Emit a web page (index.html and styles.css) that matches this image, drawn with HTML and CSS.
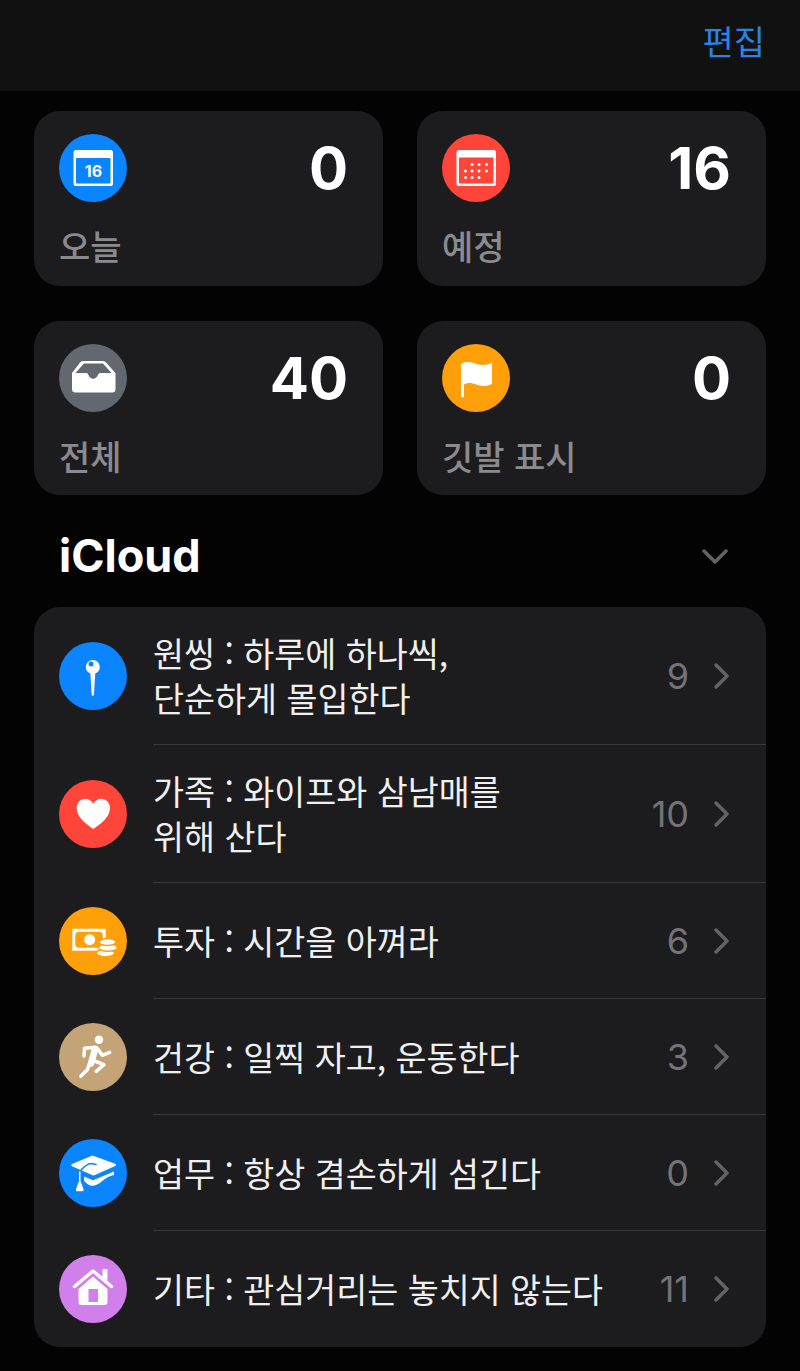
FILE: index.html
```html
<!DOCTYPE html>
<html lang="ko">
<head>
  <meta charset="UTF-8">
  <title>Reminders</title>
  <link rel="stylesheet" href="styles.css">
</head>
<body>
  <div class="navBar"><span class="editBtn">편집</span></div>

  <div class="cards">
    <div class="card">
      <div class="cardTop">
        <span class="circle blue">
          <svg viewBox="0 0 68 68" width="68" height="68"><rect x="14.500" y="16" width="39.500" height="36" rx="2.500" fill="#fff"/><rect x="17" y="24" width="34.500" height="25.500" rx="1" fill="#0a84ff"/><text x="34.500" y="43" class="calNum">16</text></svg>
        </span>
        <span class="count">0</span>
      </div>
      <div class="cardLabel">오늘</div>
    </div>
    <div class="card">
      <div class="cardTop">
        <span class="circle red">
          <svg viewBox="0 0 68 68" width="68" height="68"><rect x="14.500" y="16" width="39.500" height="36" rx="2.500" fill="#fff"/><rect x="17" y="23.500" width="34.500" height="26" rx="1" fill="#ff453a"/><g fill="#fff"><circle cx="30" cy="30.500" r="1.500"/><circle cx="37" cy="30.500" r="1.500"/><circle cx="44.500" cy="30.500" r="1.500"/><circle cx="23.500" cy="37" r="1.500"/><circle cx="30" cy="37" r="1.500"/><circle cx="37" cy="37" r="1.500"/><circle cx="44.500" cy="37" r="1.500"/><circle cx="23.500" cy="43.500" r="1.500"/><circle cx="30" cy="43.500" r="1.500"/><circle cx="37" cy="43.500" r="1.500"/></g></svg>
        </span>
        <span class="count">16</span>
      </div>
      <div class="cardLabel">예정</div>
    </div>
    <div class="card">
      <div class="cardTop">
        <span class="circle gray">
          <svg viewBox="0 0 68 68" width="68" height="68"><path fill="#fff" fill-rule="evenodd" d="M24 17h20a4 4 0 0 1 3 1.500L56.500 29v16a3.500 3.500 0 0 1-3.500 3.500H16.500A3.500 3.500 0 0 1 13 45V29l8-10.500A4 4 0 0 1 24 17zm1 2.500L16.500 29H27c1.500 0 2 .8 2.500 2 .7 2 2.500 3.700 4.700 3.700s4-1.700 4.700-3.700c.5-1.200 1-2 2.500-2h11.100L44 19.500z"/></svg>
        </span>
        <span class="count">40</span>
      </div>
      <div class="cardLabel">전체</div>
    </div>
    <div class="card">
      <div class="cardTop">
        <span class="circle orange">
          <svg viewBox="0 0 68 68" width="68" height="68"><path fill="#fff" d="M19 20c4-2.500 9-2.500 14-.5s11 2 17-.5v21c-5 2.500-11 2.500-16 .5s-8-2-12 0V52a1.500 1.500 0 0 1-3 0z"/></svg>
        </span>
        <span class="count">0</span>
      </div>
      <div class="cardLabel">깃발 표시</div>
    </div>
  </div>

  <div class="sectionHead">
    <span class="sectionTitle">iCloud</span>
    <svg class="sectionArrow" viewBox="0 0 26 16" width="26" height="16"><path d="M2 2l11 11L24 2" fill="none" stroke="#636366" stroke-width="3.500" stroke-linecap="round" stroke-linejoin="round"/></svg>
  </div>

  <div class="list">
    <div class="row tall">
      <span class="circle blue">
        <svg viewBox="0 0 68 68" width="68" height="68"><circle cx="33.800" cy="25" r="7" fill="#fff"/><path fill="#fff" d="M31.300 30h5L35 52.500a1.200 1.200 0 0 1-2.400 0z"/><circle cx="32" cy="22" r="2.500" fill="#0a84ff"/></svg>
      </span>
      <div class="rowBody">
        <div class="rowText">원씽 : 하루에 하나씩,<br>단순하게 몰입한다</div>
        <span class="rowNum">9</span>
        <svg class="chev" viewBox="0 0 16 26" width="16" height="26"><path d="M2 2l11 11L2 24" fill="none" stroke="#636366" stroke-width="3.500" stroke-linecap="round" stroke-linejoin="round"/></svg>
      </div>
    </div>
    <div class="row tall">
      <span class="circle red">
        <svg viewBox="0 0 68 68" width="68" height="68"><path fill="#fff" d="M34.300 49C28 44.500 17.700 38 17.700 28c0-5.500 4-9.300 8.500-9.300 3.500 0 6.500 2 8.100 5 1.600-3 4.600-5 8.100-5 4.500 0 8.600 3.800 8.600 9.300 0 10-10.400 16.500-16.700 21z"/></svg>
      </span>
      <div class="rowBody">
        <div class="rowText">가족 : 와이프와 삼남매를<br>위해 산다</div>
        <span class="rowNum">10</span>
        <svg class="chev" viewBox="0 0 16 26" width="16" height="26"><path d="M2 2l11 11L2 24" fill="none" stroke="#636366" stroke-width="3.500" stroke-linecap="round" stroke-linejoin="round"/></svg>
      </div>
    </div>
    <div class="row">
      <span class="circle orange">
        <svg viewBox="0 0 68 68" width="68" height="68"><rect x="13.300" y="21.700" width="33.500" height="22" fill="#fff"/><rect x="16.300" y="24.700" width="27.500" height="16" rx="4" fill="#ff9f0a"/><circle cx="30.700" cy="32.700" r="5.500" fill="#fff"/><g fill="#fff" stroke="#ff9f0a" stroke-width="1.500"><ellipse cx="46.500" cy="46" rx="9" ry="3.800"/><ellipse cx="49" cy="40.500" rx="9.500" ry="3.800"/><ellipse cx="48.500" cy="35" rx="8.500" ry="3.600"/></g></svg>
      </span>
      <div class="rowBody">
        <div class="rowText">투자 : 시간을 아껴라</div>
        <span class="rowNum">6</span>
        <svg class="chev" viewBox="0 0 16 26" width="16" height="26"><path d="M2 2l11 11L2 24" fill="none" stroke="#636366" stroke-width="3.500" stroke-linecap="round" stroke-linejoin="round"/></svg>
      </div>
    </div>
    <div class="row">
      <span class="circle tan">
        <svg viewBox="0 0 68 68" width="68" height="68"><circle cx="40" cy="16.700" r="4.200" fill="#fff"/><path fill="none" stroke="#fff" stroke-width="3.500" stroke-linecap="round" stroke-linejoin="round" d="M25 33l.5-7.700 11-1M38 25l5.300 7.300 7.400-3M33 37l12 4.700-7.700 6.600M30 41.700l-1.700 5-6.600 6.600"/><path fill="none" stroke="#fff" stroke-width="6.500" stroke-linecap="round" d="M36 26.500l-4 14"/></svg>
      </span>
      <div class="rowBody">
        <div class="rowText">건강 : 일찍 자고, 운동한다</div>
        <span class="rowNum">3</span>
        <svg class="chev" viewBox="0 0 16 26" width="16" height="26"><path d="M2 2l11 11L2 24" fill="none" stroke="#636366" stroke-width="3.500" stroke-linecap="round" stroke-linejoin="round"/></svg>
      </div>
    </div>
    <div class="row">
      <span class="circle blue">
        <svg viewBox="0 0 68 68" width="68" height="68"><path fill="#fff" d="M33.500 16.500l22.700 8.300c1 .5 1 1.800 0 2.300L36 36c-1 .5-2 .5-3 0L13 27.300c-1-.5-1-1.800 0-2.300z"/><path fill="none" stroke="#0a84ff" stroke-width="1.600" stroke-linecap="round" d="M19.500 34c4-5 8-9.500 13-9.500l4.500 1"/><path fill="#fff" d="M25 37.500l9 3.700 21-8.700v3.500c-5 1-8 3-12 6.200-3.500 2.800-6.500 4.500-9.500 4.500s-6-2-8.500-5z"/><path fill="#fff" stroke="#0a84ff" stroke-width="1" d="M19.500 32h2.500v10l3 8c.5 1.500-.5 2.800-2 2.800h-4.500c-1.500 0-2.500-1.300-2-2.800l3-8z"/></svg>
      </span>
      <div class="rowBody">
        <div class="rowText">업무 : 항상 겸손하게 섬긴다</div>
        <span class="rowNum">0</span>
        <svg class="chev" viewBox="0 0 16 26" width="16" height="26"><path d="M2 2l11 11L2 24" fill="none" stroke="#636366" stroke-width="3.500" stroke-linecap="round" stroke-linejoin="round"/></svg>
      </div>
    </div>
    <div class="row">
      <span class="circle purple">
        <svg viewBox="0 0 68 68" width="68" height="68"><path fill="#fff" d="M34 21.500L19.500 34v13a3 3 0 0 0 3 3h23a3 3 0 0 0 3-3V34z"/><rect x="29.500" y="34" width="9.500" height="13" fill="#d17fea"/><path fill="none" stroke="#fff" stroke-width="3.500" stroke-linecap="round" stroke-linejoin="round" d="M15.500 31.500L34 16l18.500 15.500"/><path fill="#fff" d="M43.500 14h5v12l-5-4z"/></svg>
      </span>
      <div class="rowBody last">
        <div class="rowText">기타 : 관심거리는 놓치지 않는다</div>
        <span class="rowNum">11</span>
        <svg class="chev" viewBox="0 0 16 26" width="16" height="26"><path d="M2 2l11 11L2 24" fill="none" stroke="#636366" stroke-width="3.500" stroke-linecap="round" stroke-linejoin="round"/></svg>
      </div>
    </div>
  </div>
</body>
</html>
```

FILE: styles.css
```css
html, body
{
    margin: 0;
    background: #030303;
}
body
{
    width: 800px;
    height: 1371px;
    overflow: hidden;
    font-family: "Noto Sans CJK KR", "Inter", sans-serif;
}
.navBar
{
    height: 91px;
    background: #111112;
    display: flex;
    justify-content: flex-end;
    align-items: center;
    padding-right: 35px;
    box-sizing: border-box;
}
.editBtn
{
    color: #2a82e4;
    font-size: 34px;
    line-height: 40px;
    margin-top: -10px;
}
.cards
{
    display: grid;
    grid-template-columns: 349px 349px;
    column-gap: 34px;
    row-gap: 35px;
    padding: 20px 34px 0;
}
.card
{
    background: #1c1c1e;
    border-radius: 26px;
    height: 174.500px;
    padding: 23px 35px 0 25px;
    box-sizing: border-box;
}
.cardTop
{
    display: flex;
    justify-content: space-between;
    align-items: center;
    height: 68px;
}
.count
{
    font-family: "Inter", sans-serif;
    font-weight: 700;
    font-size: 58px;
    line-height: 68px;
    color: #fff;
}
.cardLabel
{
    margin-top: 21px;
    font-size: 34px;
    font-weight: 500;
    line-height: 46px;
    color: #8a8a8f;
}
.circle
{
    display: block;
    flex: none;
    width: 68px;
    height: 68px;
    border-radius: 50%;
}
.circle svg
{
    display: block;
}
.calNum
{
    font-family: "Inter", sans-serif;
    font-weight: 700;
    font-size: 16px;
    fill: #fff;
    text-anchor: middle;
}
.blue { background: #0a84ff; }
.red { background: #ff453a; }
.gray { background: #636870; }
.orange { background: #ff9f0a; }
.tan { background: #c4a477; }
.purple { background: #d17fea; }
.sectionHead
{
    display: flex;
    justify-content: space-between;
    align-items: center;
    height: 112px;
    padding: 0 72px 0 59px;
    box-sizing: border-box;
}
.sectionTitle
{
    font-family: "Inter", sans-serif;
    font-weight: 700;
    font-size: 45px;
    color: #fff;
    margin-top: 9px;
}
.sectionArrow
{
    margin-top: 11px;
}
.list
{
    margin: 0 34px;
    background: #1c1c1e;
    border-radius: 26px;
    overflow: hidden;
}
.row
{
    display: flex;
    align-items: center;
    height: 116px;
    padding-left: 25px;
}
.row.tall
{
    height: 138px;
}
.rowBody
{
    flex: 1;
    align-self: stretch;
    display: flex;
    align-items: center;
    margin-left: 26px;
    padding-right: 36px;
    border-bottom: 1px solid #38383a;
}
.rowBody.last
{
    border-bottom: none;
}
.rowText
{
    flex: 1;
    color: #f0f0f0;
    font-size: 33.700px;
    line-height: 45px;
    margin-top: -1px;
}
.rowNum
{
    font-family: "Inter", sans-serif;
    font-size: 36px;
    color: #737378;
    margin-right: 25px;
}
.chev
{
    flex: none;
}
```
